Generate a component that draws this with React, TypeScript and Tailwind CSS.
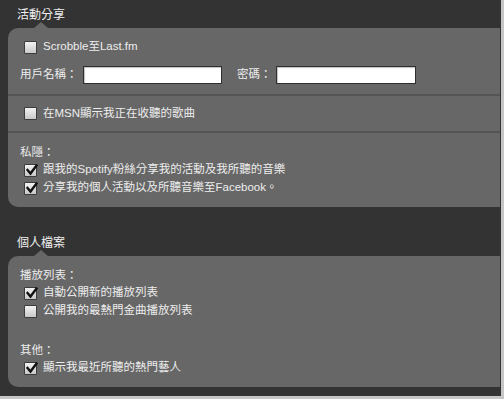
import React from 'react';

const font = { fontFamily: '"Liberation Sans", "Noto Sans CJK TC", sans-serif' };

const Check: React.FC<{ checked?: boolean }> = ({ checked }) => (
  <span className="relative inline-flex h-[13px] w-[13px] shrink-0 rounded-[1px] border border-[#3c3c3c] bg-gradient-to-b from-[#f2f2f2] to-[#c9c9c9]">
    {checked && (
      <svg className="absolute left-[1px] top-[-1px]" width="12" height="12" viewBox="0 0 12 12">
        <path d="M1.5 6 L4.5 9.5 L10.5 1.5" fill="none" stroke="#111" strokeWidth="2.4" strokeLinecap="square" />
      </svg>
    )}
  </span>
);

const CheckRow: React.FC<{ checked?: boolean; label: string }> = ({ checked, label }) => (
  <div className="flex h-[18px] items-center gap-[6px] pl-[16px]">
    <Check checked={checked} />
    <span>{label}</span>
  </div>
);

const SectionTitle: React.FC<{ title: string }> = ({ title }) => (
  <div className="h-[18px] pl-[17px] text-[12px] leading-[18px] text-[#f0f0f0]">{title}</div>
);

const Panel: React.FC<{ children: React.ReactNode; className?: string }> = ({ children, className }) => (
  <div className={`relative ml-2 rounded-l-[10px] bg-[#676767] ${className || ''}`}>
    <span className="absolute left-[26px] top-[-6px] h-0 w-0 border-x-[7px] border-b-[6px] border-x-transparent border-b-[#676767]" />
    {children}
  </div>
);

const App: React.FC = () => {
  return (
    <div
      className="h-[399px] w-[504px] overflow-hidden border-b-[3px] border-r-[3px] border-[#c6c6c6] bg-[#333333] pt-[6px] text-[11.5px] text-[#ededed]"
      style={font}
    >
      <div className="mr-px">
        <SectionTitle title="活動分享" />
        <Panel className="mt-[4px]">
          <div className="flex flex-col gap-[10px] py-[10px]">
            <CheckRow label="Scrobble至Last.fm" />
            <div className="flex h-[18px] items-center pl-[12px]">
              <span className="w-[63px]">用戶名稱：</span>
              <input className="h-[18px] w-[139px] border border-[#2f2f2f] bg-white shadow-[inset_1px_1px_1px_rgba(0,0,0,0.25)] outline-none" />
              <span className="ml-[15px] w-[39px]">密碼：</span>
              <input type="password" className="h-[18px] w-[140px] border border-[#2f2f2f] bg-white shadow-[inset_1px_1px_1px_rgba(0,0,0,0.25)] outline-none" />
            </div>
          </div>
          <div className="flex h-[39px] items-center border-y-2 border-[#555555]">
            <CheckRow label="在MSN顯示我正在收聽的歌曲" />
          </div>
          <div className="py-[10px]">
            <div className="h-[18px] pl-[12px] leading-[18px]">私隱：</div>
            <CheckRow checked label="跟我的Spotify粉絲分享我的活動及我所聽的音樂" />
            <CheckRow checked label="分享我的個人活動以及所聽音樂至Facebook。" />
          </div>
        </Panel>

        <div className="mt-[27px]">
          <SectionTitle title="個人檔案" />
        </div>
        <Panel className="mt-[4px]">
          <div className="pt-[10px] pb-[10px]">
            <div className="h-[18px] pl-[12px] leading-[18px]">播放列表：</div>
            <CheckRow checked label="自動公開新的播放列表" />
            <CheckRow label="公開我的最熱門金曲播放列表" />
            <div className="mt-[21px] h-[18px] pl-[12px] leading-[18px]">其他：</div>
            <CheckRow checked label="顯示我最近所聽的熱門藝人" />
          </div>
        </Panel>
      </div>
    </div>
  );
};

export default App;
